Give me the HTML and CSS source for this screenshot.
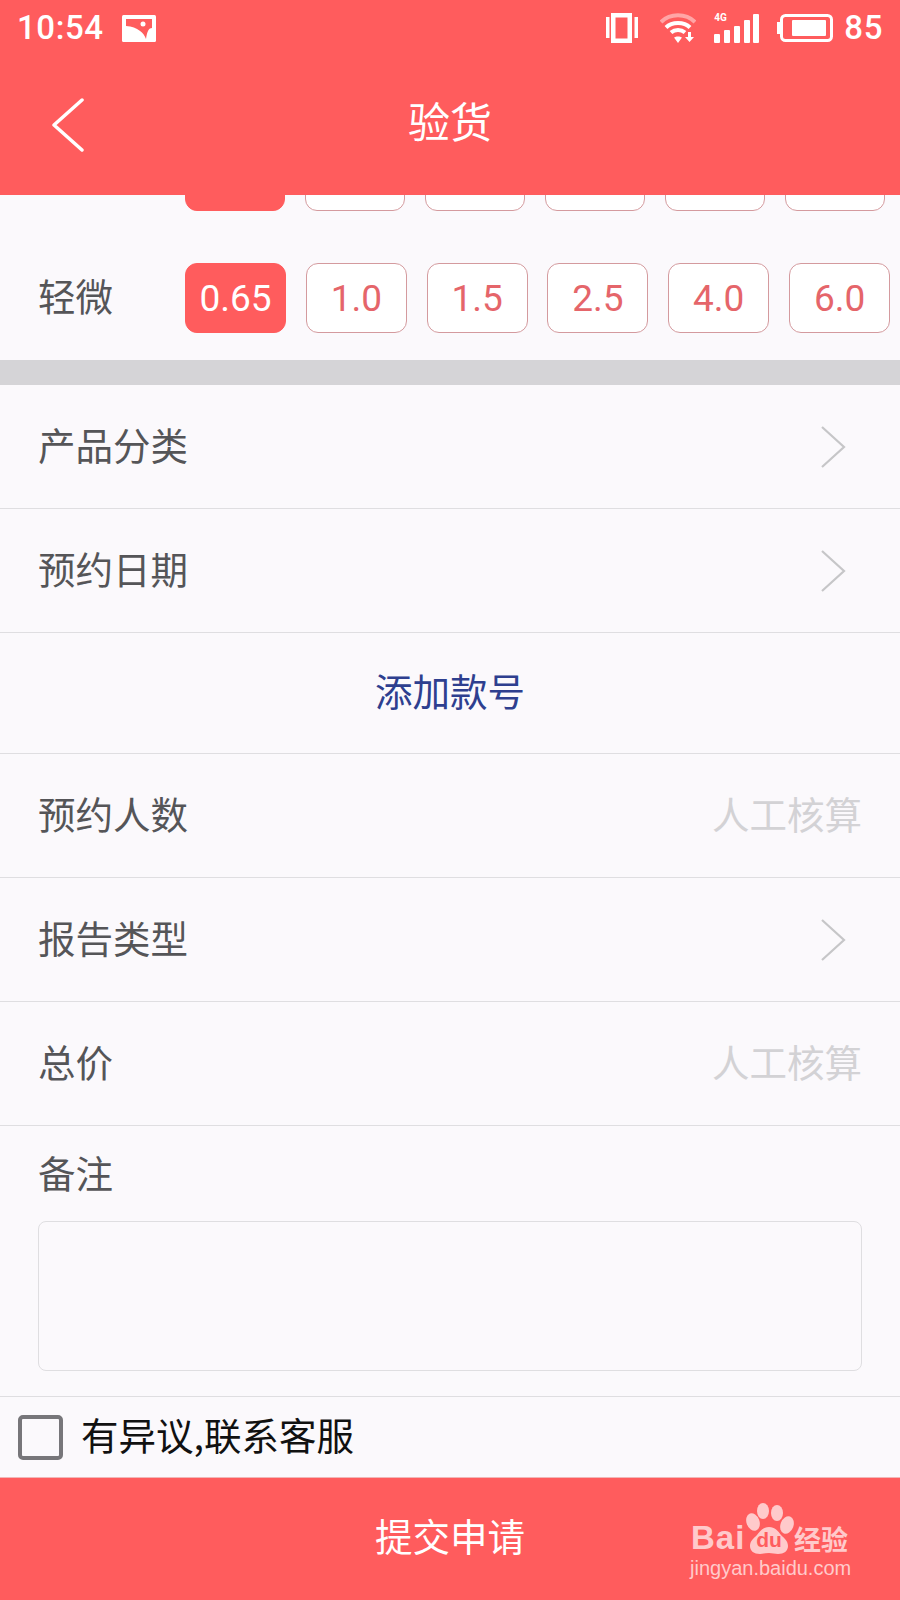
FILE: index.html
```html
<!DOCTYPE html>
<html lang="zh-CN">
<head>
<meta charset="utf-8">
<title>验货</title>
<link rel="stylesheet" href="styles.css">
</head>
<body>
<div class="app">
  <header class="top">
    <div class="status">
      <div class="status-left">
        <span class="status-text">10:54</span>
        <svg class="ic-photo" width="34" height="27" viewBox="0 0 34 27"><rect width="34" height="27" rx="1.500" fill="#fff"/><path fill="#ff5c5d" d="M4 4H30V13C27 13 25 16 24 24C22 18 16 12 4 11Z"/><circle cx="21" cy="9" r="2.500" fill="#fff"/></svg>
      </div>
      <div class="status-right">
        <svg class="ic-vibrate" width="32" height="30" viewBox="0 0 32 30"><path fill="#fff" fill-rule="evenodd" d="M5 0h21v30H5zM9.500 4.500v21h12v-21z"/><path fill="#fff" d="M0 4h3.500v21H0zM28.500 4H32v21h-3.500z"/></svg>
        <svg width="36" height="32" viewBox="0 0 36 32"><path d="M1 10C10 1 26 1 35 10" fill="none" stroke="#fff" stroke-opacity=".45" stroke-width="4"/><path d="M6 15.500c6-6 18-6 24 0" fill="none" stroke="#fff" stroke-width="4"/><path d="M11 20.500c4-3.500 10-3.500 14 0" fill="none" stroke="#fff" stroke-width="4"/><path fill="#fff" d="M14 25.500c2-1.500 6-1.500 8 0L18 31zM28 20h3v5h3l-4.500 5-4.500-5h3z"/></svg>
        <div class="signal">
          <span class="net">4G</span>
          <i class="bar b1"></i><i class="bar b2"></i><i class="bar b3"></i><i class="bar b4"></i><i class="bar b5"></i>
        </div>
        <svg class="ic-battery" width="56" height="28" viewBox="0 0 56 28"><path fill="#fff" d="M0 8h3v12H0z"/><rect x="4.500" y="1.500" width="50" height="25" rx="4" fill="none" stroke="#fff" stroke-width="3"/><rect x="15" y="6" width="34" height="16" rx="1" fill="#fff"/></svg>
        <span class="status-text">85</span>
      </div>
    </div>
    <div class="nav">
      <svg class="back" width="34" height="54" viewBox="0 0 34 54"><path d="M31 2 3 27l28 25" fill="none" stroke="#fff" stroke-width="3.500" stroke-linecap="round" stroke-linejoin="round"/></svg>
      <h1 class="title">验货</h1>
    </div>
  </header>

  <main class="content">
    <section class="levels">
      <div class="pills pills-cut">
        <span class="pill on"></span><span class="pill"></span><span class="pill"></span><span class="pill"></span><span class="pill"></span><span class="pill"></span>
      </div>
      <div class="level">
        <span class="label level-name">轻微</span>
        <div class="pills">
          <span class="pill on">0.65</span><span class="pill">1.0</span><span class="pill">1.5</span><span class="pill">2.5</span><span class="pill">4.0</span><span class="pill">6.0</span>
        </div>
      </div>
    </section>
    <div class="divider"></div>
    <div class="row"><span class="label">产品分类</span><svg class="chev" width="26" height="44" viewBox="0 0 26 44"><path d="M2 2l22 20L2 42" fill="none" stroke="#c6c6c8" stroke-width="2.200"/></svg></div>
    <div class="row"><span class="label">预约日期</span><svg class="chev" width="26" height="44" viewBox="0 0 26 44"><path d="M2 2l22 20L2 42" fill="none" stroke="#c6c6c8" stroke-width="2.200"/></svg></div>
    <div class="row row-add"><span class="add">添加款号</span></div>
    <div class="row"><span class="label">预约人数</span><span class="hint">人工核算</span></div>
    <div class="row"><span class="label">报告类型</span><svg class="chev" width="26" height="44" viewBox="0 0 26 44"><path d="M2 2l22 20L2 42" fill="none" stroke="#c6c6c8" stroke-width="2.200"/></svg></div>
    <div class="row"><span class="label">总价</span><span class="hint">人工核算</span></div>
    <div class="note">
      <span class="label note-label">备注</span>
      <div class="note-box"></div>
    </div>
    <div class="agree">
      <span class="check"></span>
      <span class="agree-text">有异议,联系客服</span>
    </div>
  </main>

  <footer class="submit">
    <span class="submit-text">提交申请</span>
    <div class="mark">
      <div class="mark-logo">
        <span class="mark-bai">Bai</span>
        <svg class="mark-paw" width="56" height="58" viewBox="0 0 56 58"><ellipse cx="13" cy="23" rx="6.500" ry="9" transform="rotate(-20 13 23)"/><ellipse cx="23" cy="12" rx="6" ry="8"/><ellipse cx="37" cy="14" rx="6" ry="8"/><ellipse cx="47" cy="26" rx="6.500" ry="9" transform="rotate(20 47 26)"/><path d="M29 28c6 0 9 4 12 8 3 3 7 6 7 11 0 5-4 8-10 8-3 0-6-1-9-1s-6 1-9 1c-6 0-10-3-10-8 0-5 4-8 7-11 3-4 6-8 12-8z"/></svg>
        <span class="mark-du">du</span>
        <span class="mark-cn">经验</span>
      </div>
      <div class="mark-url">jingyan.baidu.com</div>
    </div>
  </footer>
</div>
</body>
</html>
```
FILE: styles.css
```css
* { box-sizing: border-box; }
html, body { margin: 0; padding: 0; }
body {
  font-family: "Roboto", "Noto Sans CJK SC", sans-serif;
  background: #fbf9fc;
}
.app {
  width: 900px;
  height: 1600px;
  display: flex;
  flex-direction: column;
  overflow: hidden;
}
.top {
  height: 195px;
  background: #ff5c5d;
  color: #fff;
  display: flex;
  flex-direction: column;
  flex: none;
}
.status {
  height: 56px;
  padding: 0 17px;
  display: flex;
  justify-content: space-between;
  align-items: center;
}
.status-left, .status-right { display: flex; align-items: center; }
.status-left { gap: 18px; }
.status-right { gap: 18px; }
.status-text {
  font-size: 33px;
  font-weight: 500;
  letter-spacing: 0.6px;
  line-height: 56px;
}
.ic-vibrate { margin-right: 4px; }
.ic-battery { margin-right: -7px; }
.signal {
  position: relative;
  width: 45px;
  height: 30px;
  display: flex;
  align-items: flex-end;
  justify-content: space-between;
}
.net {
  position: absolute;
  left: 0;
  top: -1px;
  font-size: 10px;
  line-height: 11px;
  font-weight: 700;
}
.bar { display: block; width: 6px; background: #fff; border-radius: 1px; }
.b1 { height: 9px; }
.b2 { height: 13px; }
.b3 { height: 17px; }
.b4 { height: 23px; }
.b5 { height: 29px; }
.nav {
  height: 139px;
  position: relative;
  display: flex;
  align-items: center;
  justify-content: center;
  padding-bottom: 12px;
}
.back { position: absolute; left: 51px; top: 42px; }
.title {
  margin: 0;
  font-size: 42px;
  font-weight: 400;
  font-family: "Noto Sans CJK SC", sans-serif;
  line-height: 56px;
}
.content { flex: 1; display: flex; flex-direction: column; min-height: 0; }
.levels { height: 165px; }
.pills { display: flex; gap: 20px; }
.pills-cut {
  height: 16px;
  padding-left: 185px;
  align-items: flex-end;
  overflow: hidden;
}
.level {
  display: flex;
  align-items: center;
  margin-top: 52px;
  padding-left: 38px;
}
.level-name { width: 147px; flex: none; }
.pill {
  flex: none;
  width: 101px;
  height: 70px;
  border: 1px solid #d49a9e;
  border-radius: 12px;
  background: #fff;
  color: #e5656a;
  font-size: 37px;
  display: flex;
  align-items: center;
  justify-content: center;
  margin-right: -0.2px;
}
.pills-cut .pill { width: 100px; margin-right: 0; }
.pill.on { background: #ff5c5d; border-color: #ff5c5d; color: #fff; }
.divider { height: 25px; background: #d5d4d7; flex: none; }
.label {
  font-family: "Noto Sans CJK SC", sans-serif;
  font-size: 37.500px;
  line-height: 50px;
  padding-bottom: 6px;
  color: #555558;
}
.note-label { display: block; }
.row {
  height: 124px;
  flex: none;
  padding: 0 38px;
  border-bottom: 1px solid #dfdee1;
  display: flex;
  align-items: center;
  justify-content: space-between;
  font-family: "Noto Sans CJK SC", sans-serif;
}
.row-add { height: 121px; justify-content: center; }
.add { font-size: 37.500px; color: #2e3f8f; line-height: 50px; padding-bottom: 6px; }
.hint { font-size: 37.500px; color: #d3d2d5; line-height: 50px; padding-bottom: 6px; }
.chev { margin-right: 16px; }
.note {
  height: 271px;
  padding: 21px 38px 0;
  border-bottom: 1px solid #dfdee1;
  flex: none;
}
.note-box {
  height: 150px;
  margin-top: 18px;
  border: 1px solid #dfdee1;
  border-radius: 8px;
}
.agree {
  flex: 1;
  display: flex;
  align-items: center;
  padding: 0 18px;
  gap: 18px;
}
.check {
  width: 45px;
  height: 45px;
  border: 4px solid #77767a;
  border-radius: 5px;
  flex: none;
}
.agree-text {
  font-family: "Noto Sans CJK SC", sans-serif;
  font-size: 37.500px;
  line-height: 50px;
  padding-bottom: 6px;
  color: #111;
}
.submit {
  height: 123px;
  flex: none;
  background: #ff5c5d;
  color: #fff;
  position: relative;
  display: flex;
  align-items: center;
  justify-content: center;
  border-top: 1px solid #f1b7b8;
}
.submit-text {
  font-family: "Noto Sans CJK SC", sans-serif;
  font-size: 37.500px;
  line-height: 50px;
  padding-bottom: 9px;
}
.mark {
  position: absolute;
  left: 690px;
  top: 21px;
  width: 165px;
  color: #ffcacb;
}
.mark-logo { position: relative; height: 57px; }
.mark-bai {
  position: absolute;
  left: 1px;
  top: 21px;
  font-family: "Liberation Sans", sans-serif;
  font-weight: 700;
  font-size: 33px;
  letter-spacing: 1px;
  line-height: 36px;
}
.mark-paw { position: absolute; left: 50px; top: 0; fill: #ffcacb; }
.mark-du {
  position: absolute;
  left: 61px;
  top: 29px;
  width: 36px;
  color: #ff5c5d;
  font-family: "Liberation Sans", sans-serif;
  font-weight: 700;
  font-size: 21px;
  line-height: 24px;
  text-align: center;
}
.mark-cn {
  position: absolute;
  left: 104px;
  top: 22px;
  font-family: "Noto Sans CJK SC", sans-serif;
  font-weight: 700;
  font-size: 27px;
  line-height: 36px;
  white-space: nowrap;
}
.mark-url {
  font-family: "Liberation Sans", sans-serif;
  font-size: 20px;
  line-height: 24px;
  white-space: nowrap;
}
```
